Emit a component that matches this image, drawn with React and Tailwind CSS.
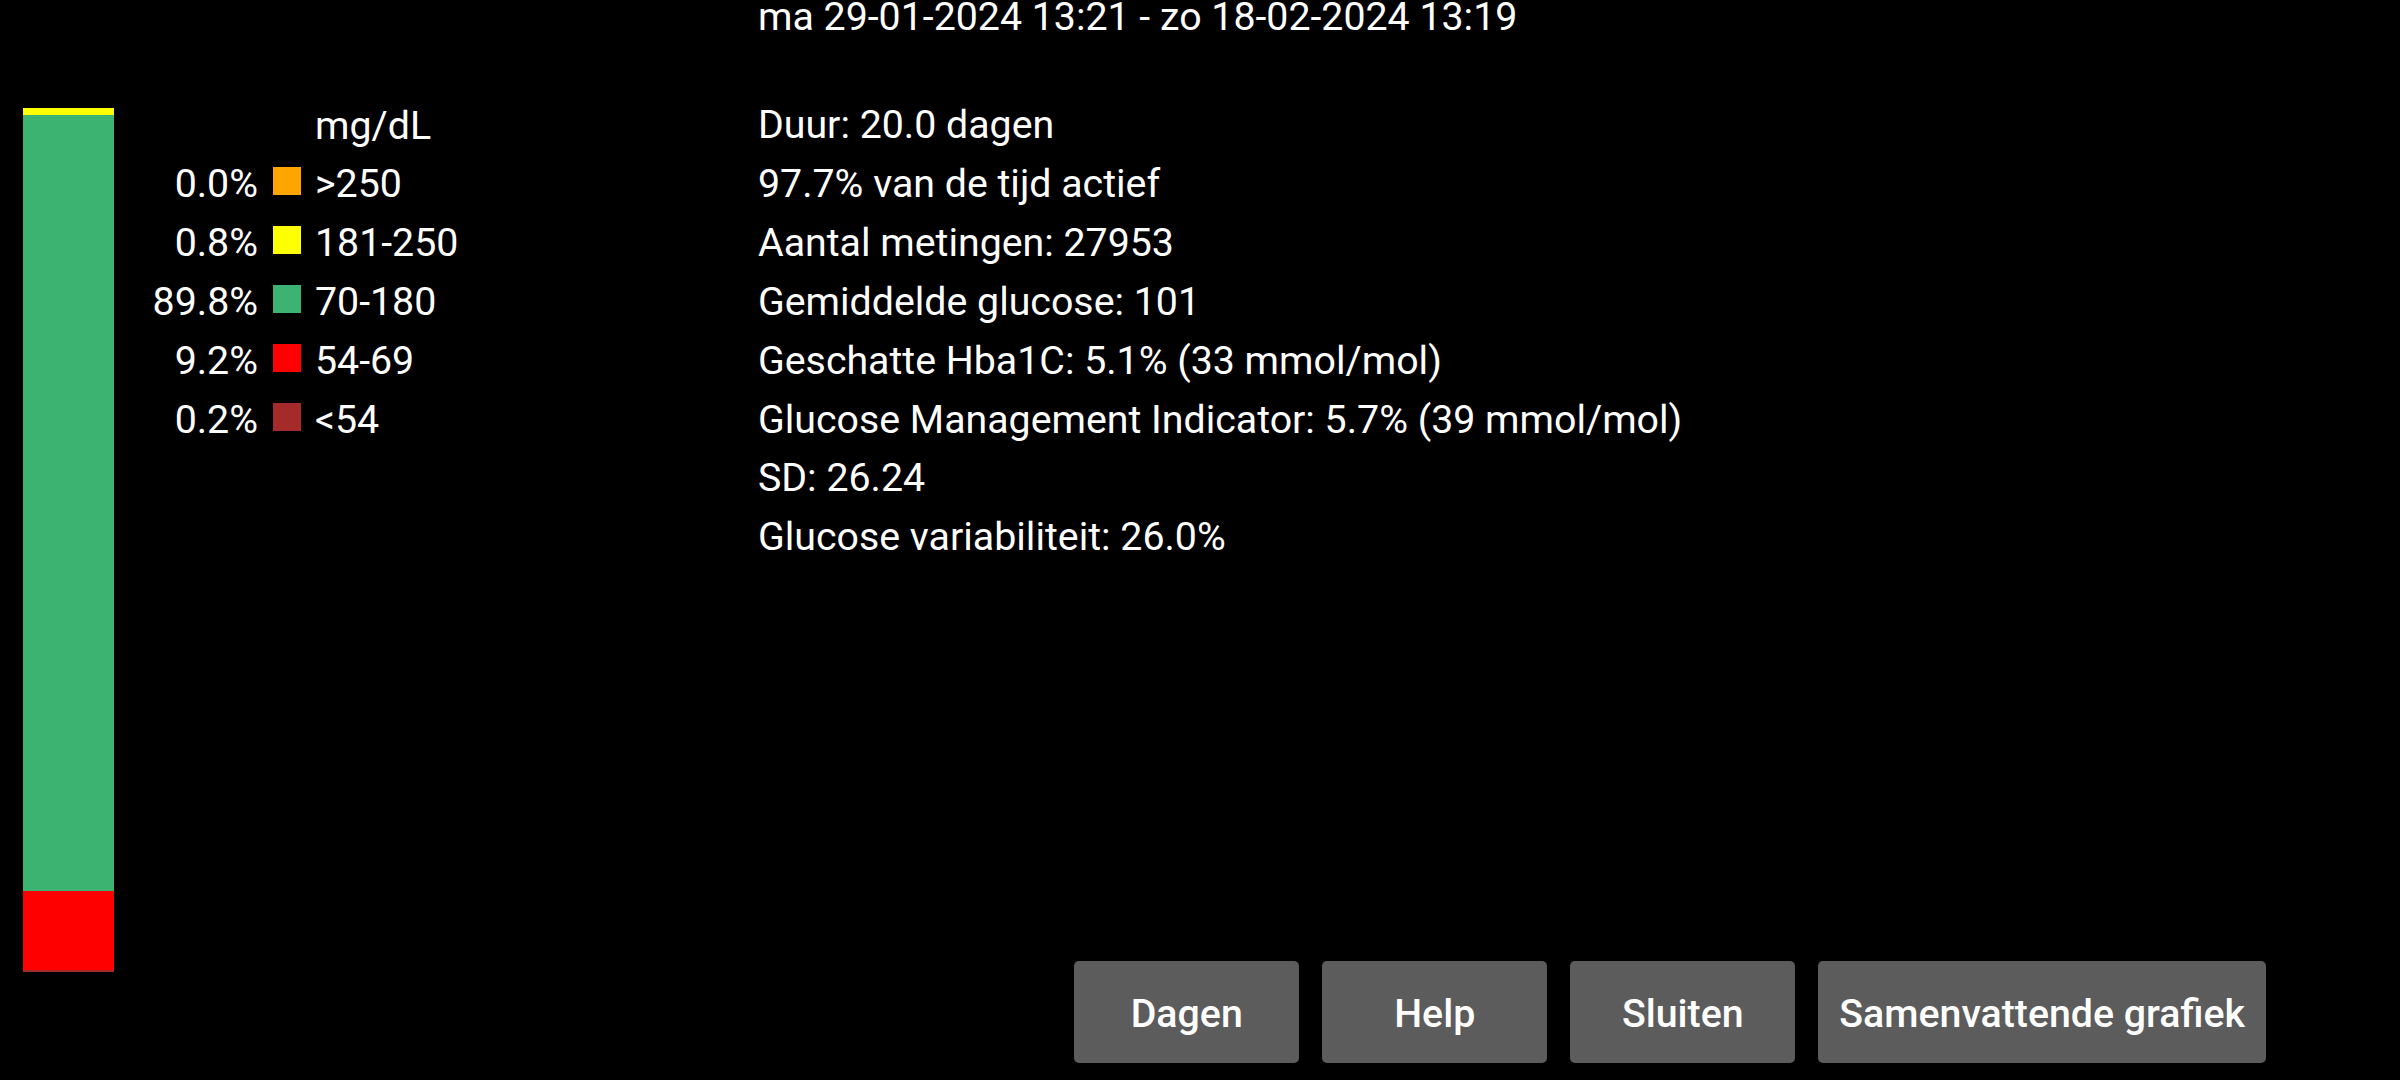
import React from "react";

const segments = [
  { pct: 0.0, color: "bg-[#ffa500]" },
  { pct: 0.8, color: "bg-[#ffff00]" },
  { pct: 89.8, color: "bg-[#3cb371]" },
  { pct: 9.2, color: "bg-[#ff0000]" },
  { pct: 0.2, color: "bg-[#a52a2a]" },
];

const legend = [
  { pct: "0.0%", color: "bg-[#ffa500]", range: ">250" },
  { pct: "0.8%", color: "bg-[#ffff00]", range: "181-250" },
  { pct: "89.8%", color: "bg-[#3cb371]", range: "70-180" },
  { pct: "9.2%", color: "bg-[#ff0000]", range: "54-69" },
  { pct: "0.2%", color: "bg-[#a52a2a]", range: "<54" },
];

const stats = [
  "Duur: 20.0 dagen",
  "97.7% van de tijd actief",
  "Aantal metingen: 27953",
  "Gemiddelde glucose: 101",
  "Geschatte Hba1C: 5.1% (33 mmol/mol)",
  "Glucose Management Indicator: 5.7% (39 mmol/mol)",
  "SD: 26.24",
  "Glucose variabiliteit: 26.0%",
];

const BAR_H = 864;

export default function App() {
  return (
    <div className="w-[2400px] h-[1080px] bg-black text-white overflow-hidden flex [font-family:Roboto,sans-serif] text-[39.3px] leading-[58.85px]">
      {/* Left: bar + legend */}
      <div className="w-[758px] shrink-0 flex">
        <div className="ml-[23px] mt-[108px] w-[91px] flex flex-col" style={{ height: BAR_H }}>
          {segments.map((s, i) => (
            <div key={i} className={s.color} style={{ height: (BAR_H * s.pct) / 100 }} />
          ))}
        </div>
        <div className="ml-[24px] mt-[96.5px] flex flex-col">
          <div className="flex">
            <div className="w-[120px]" />
            <div className="ml-[15px] w-[28px]" />
            <div className="ml-[14px]">mg/dL</div>
          </div>
          {legend.map((l) => (
            <div key={l.range} className="flex items-start">
              <div className="w-[120px] text-right">{l.pct}</div>
              <div className={`ml-[15px] mt-[12px] w-[28px] h-[28px] ${l.color}`} />
              <div className="ml-[14px]">{l.range}</div>
            </div>
          ))}
        </div>
      </div>

      {/* Right: title, stats, buttons */}
      <div className="flex-1 flex flex-col">
        <div className="mt-[-12px] whitespace-nowrap">ma 29-01-2024 13:21 - zo 18-02-2024 13:19</div>
        <div className="mt-[49.5px] flex flex-col">
          {stats.map((s) => (
            <div key={s} className="whitespace-nowrap">{s}</div>
          ))}
        </div>
        <div className="mt-auto mb-[17px] pr-[134px] flex justify-end gap-[23px]">
          {["Dagen", "Help", "Sluiten"].map((b) => (
            <button
              key={b}
              className="w-[225px] h-[102px] rounded-[5px] bg-[#5c5c5d] text-white font-medium flex items-center justify-center pt-[6px] leading-none"
            >
              {b}
            </button>
          ))}
          <button className="h-[102px] px-[21px] rounded-[5px] bg-[#5c5c5d] text-white font-medium flex items-center justify-center pt-[6px] leading-none whitespace-nowrap">
            Samenvattende grafiek
          </button>
        </div>
      </div>
    </div>
  );
}
